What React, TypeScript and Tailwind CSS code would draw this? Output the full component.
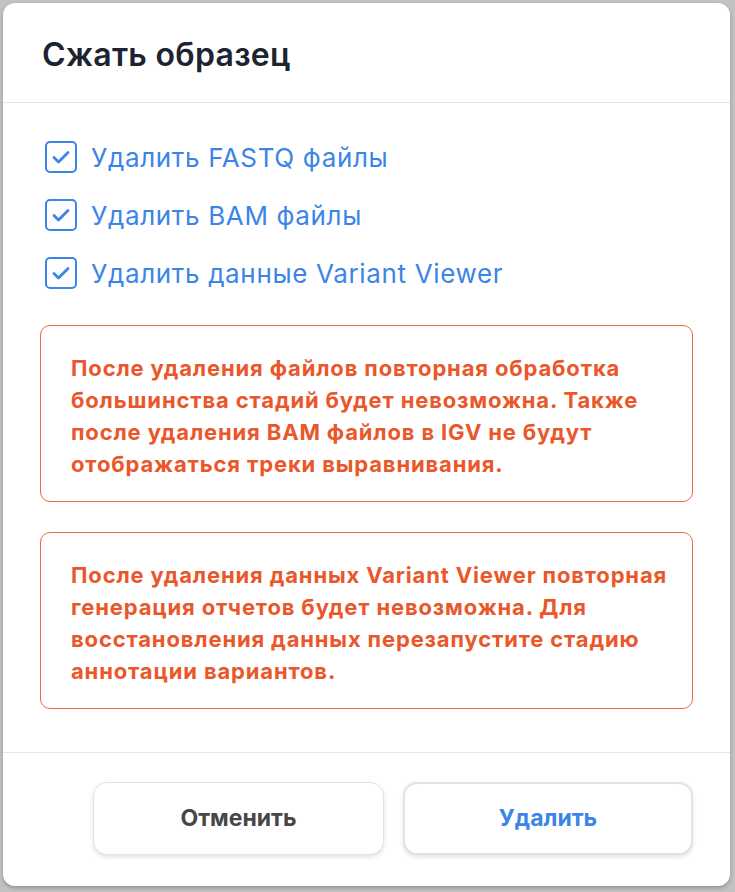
import React, { useState } from 'react';

const font = { fontFamily: 'Inter, "Noto Sans", sans-serif' };

const options = [
  'Удалить FASTQ файлы',
  'Удалить BAM файлы',
  'Удалить данные Variant Viewer',
];

const warnings = [
  [
    'После удаления файлов повторная обработка',
    'большинства стадий будет невозможна. Также',
    'после удаления BAM файлов в IGV не будут',
    'отображаться треки выравнивания.',
  ],
  [
    'После удаления данных Variant Viewer повторная',
    'генерация отчетов будет невозможна. Для',
    'восстановления данных перезапустите стадию',
    'аннотации вариантов.',
  ],
];

const CheckBox: React.FC<{ checked: boolean }> = ({ checked }) => (
  <span className="flex h-8 w-8 shrink-0 items-center justify-center rounded-[5px] border-2 border-[#3b84e8] bg-white">
    {checked && (
      <svg width="22" height="22" viewBox="0 0 22 22" fill="none">
        <path d="M4 11.5l4.5 4.5L18 6.5" stroke="#3b84e8" strokeWidth="2.8" strokeLinecap="round" strokeLinejoin="round" />
      </svg>
    )}
  </span>
);

export default function App() {
  const [checked, setChecked] = useState([true, true, true]);

  const toggle = (i: number) => setChecked(prev => prev.map((v, j) => (j === i ? !v : v)));

  return (
    <div className="min-h-screen bg-[#c3c3c3] p-[3px]" style={font}>
      <div className="flex w-[727px] flex-col rounded-xl bg-white shadow-[0_2px_4px_rgba(0,0,0,0.25)]">
        <div className="flex h-[100px] items-center border-b border-[#e3e5eb] px-[39px] pt-1">
          <h1 className="text-[32px] font-semibold tracking-[0.3px] text-[#1b2430]">Сжать образец</h1>
        </div>

        <div className="flex flex-col px-[37px] pt-[38px] pb-[43px]">
          <div className="flex flex-col gap-[26px] pl-[5px]">
            {options.map((label, i) => (
              <label key={label} className="flex h-8 cursor-pointer items-center gap-[14px]" onClick={() => toggle(i)}>
                <CheckBox checked={checked[i]} />
                <span className="text-[26px] tracking-[0.65px] text-[#3b84e8]">{label}</span>
              </label>
            ))}
          </div>

          <div className="mt-9 flex flex-col gap-[30px]">
            {warnings.map((lines, i) => (
              <div key={i} className="rounded-[10px] border-[1.5px] border-[#ec6a42] pl-[30px] pr-4 pt-[26px] pb-[21px]">
                {lines.map(line => (
                  <p key={line} className="whitespace-nowrap text-[22px] leading-8 font-bold tracking-[0.85px] text-[#e9572a]">{line}</p>
                ))}
              </div>
            ))}
          </div>
        </div>

        <div className="flex justify-end gap-[19px] border-t border-[#e3e5eb] px-[37px] pt-[29px] pb-[31px]">
          <button className="h-[73px] w-[291px] rounded-[14px] border border-[#e1e3ea] bg-white text-[23px] font-bold text-[#474747] shadow-[0_2px_4px_rgba(0,0,0,0.12)]">
            Отменить
          </button>
          <button className="h-[73px] w-[290px] rounded-[14px] border-2 border-[#dde2ec] bg-white text-[23px] font-bold text-[#3b84e8] shadow-[0_2px_4px_rgba(0,0,0,0.12)]">
            Удалить
          </button>
        </div>
      </div>
    </div>
  );
}
